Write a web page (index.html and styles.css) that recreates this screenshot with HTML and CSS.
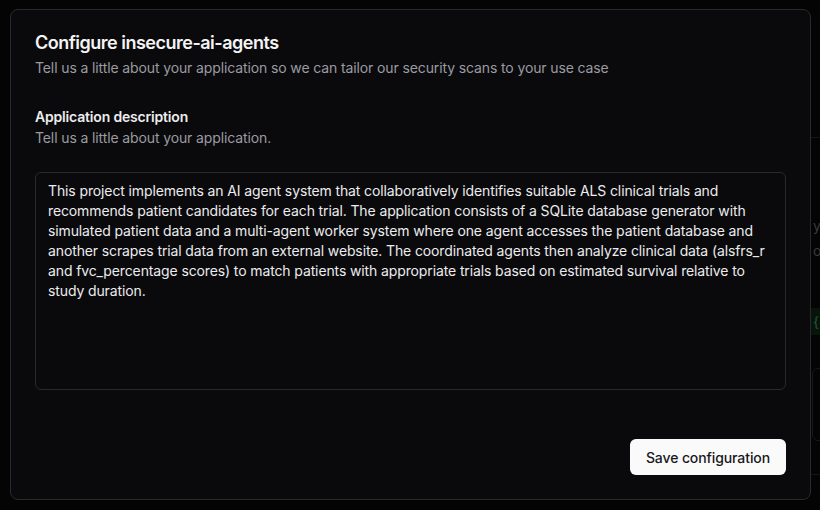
FILE: index.html
```html
<!DOCTYPE html>
<html lang="en">
<head>
<meta charset="utf-8">
<title>Configure insecure-ai-agents</title>
<link rel="stylesheet" href="styles.css">
</head>
<body>
<div class="backdrop" aria-hidden="true">
  <div class="backdrop-line">you</div>
  <div class="backdrop-line">out</div>
  <div class="backdrop-code">{ }</div>
  <div class="backdrop-card"></div>
  <div class="backdrop-rule"></div>
</div>
<div class="modal">
  <header class="modal-head">
    <h1 class="title">Configure insecure-ai-agents</h1>
    <p class="subtitle">Tell us a little about your application so we can tailor our security scans to your use case</p>
  </header>
  <div class="field">
    <label class="label" for="desc">Application description</label>
    <p class="hint">Tell us a little about your application.</p>
    <textarea id="desc" class="textarea">This project implements an AI agent system that collaboratively identifies suitable ALS clinical trials and recommends patient candidates for each trial. The application consists of a SQLite database generator with simulated patient data and a multi-agent worker system where one agent accesses the patient database and another scrapes trial data from an external website. The coordinated agents then analyze clinical data (alsfrs_r and fvc_percentage scores) to match patients with appropriate trials based on estimated survival relative to study duration.</textarea>
  </div>
  <div class="actions">
    <button class="btn" type="button">Save configuration</button>
  </div>
</div>
</body>
</html>
```

FILE: styles.css
```css
* { box-sizing: border-box; }
html, body { margin: 0; height: 100%; }
body {
  background: #040405;
  font-family: Inter, "Noto Sans", sans-serif;
  padding: 9px 0 0 10px;
  overflow: hidden;
  position: relative;
}
.backdrop {
  position: absolute;
  left: 790px;
  top: 137px;
  width: 60px;
  height: 380px;
  border-top: 1px solid #151517;
  color: #3a3a3e;
  font-size: 14px;
  padding: 75px 0 0 23px;
}
.backdrop-line { line-height: 25px; }
.backdrop-code {
  color: #1f5a32;
  background: #08130c;
  margin: 45px 0 0 -4px;
  padding-left: 4px;
  height: 27px;
  line-height: 27px;
  font-size: 14px;
}
.backdrop-card {
  margin: 33px 0 0 -1px;
  height: 73px;
  border: 1px solid #18181b;
  border-radius: 6px;
}
.backdrop-rule {
  margin-top: 33px;
  border-top: 1px solid #151517;
  margin-left: -23px;
}
.modal {
  position: relative;
  width: 801px;
  height: 491px;
  background: #0a0a0c;
  border: 1px solid #2a2a2d;
  border-radius: 8px;
  padding: 19px 24px 24px 24px;
  display: flex;
  flex-direction: column;
}
.title {
  margin: 0;
  font-size: 18px;
  line-height: 28px;
  font-weight: 600;
  color: #f4f4f5;
  letter-spacing: -0.5px;
}
.subtitle {
  margin: 1px 0 0;
  font-size: 14px;
  line-height: 20px;
  color: #9b9ba1;
  letter-spacing: -0.12px;
}
.field {
  margin-top: 29px;
  display: flex;
  flex-direction: column;
}
.label {
  font-size: 14px;
  line-height: 20px;
  font-weight: 600;
  color: #ededee;
  letter-spacing: -0.18px;
}
.hint {
  margin: 1px 0 0;
  font-size: 14px;
  line-height: 20px;
  color: #9b9ba1;
  letter-spacing: -0.12px;
}
.textarea {
  margin-top: 24px;
  height: 218px;
  width: 100%;
  resize: none;
  background: #0a0a0c;
  border: 1px solid #2a2a2d;
  border-radius: 6px;
  padding: 8px 12px;
  font-family: Inter, "Noto Sans", sans-serif;
  font-size: 14px;
  line-height: 20px;
  letter-spacing: -0.12px;
  color: #ececee;
  outline: none;
}
.actions {
  margin-top: auto;
  display: flex;
  justify-content: flex-end;
}
.btn {
  height: 36px;
  padding: 0 16px;
  background: #fafafa;
  color: #18181b;
  border: none;
  border-radius: 6px;
  font-family: Inter, "Noto Sans", sans-serif;
  font-size: 14px;
  font-weight: 500;
  letter-spacing: -0.1px;
}
```
